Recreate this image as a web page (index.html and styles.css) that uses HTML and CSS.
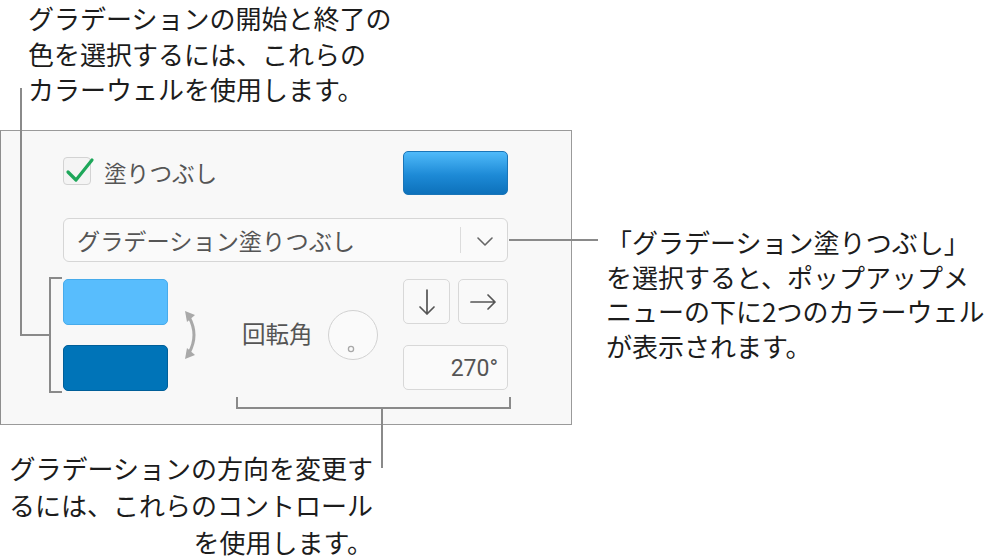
FILE: index.html
```html
<!DOCTYPE html>
<html lang="ja">
<head>
<meta charset="utf-8">
<title>グラデーション塗りつぶし</title>
<link rel="stylesheet" href="styles.css">
</head>
<body>
<div class="stage">
  <p class="note note-top">グラデーションの開始と終了の<br>色を選択するには、これらの<br>カラーウェルを使用します。</p>

  <section class="panel">
    <div class="fill-row">
      <label class="fill-toggle">
        <span class="checkbox">
          <svg class="check" width="28" height="28" viewBox="0 0 28 28"><path d="M5 15 L13 23 L29 3" /></svg>
        </span>
        <span class="fill-label">塗りつぶし</span>
      </label>
      <span class="well well-main"></span>
    </div>

    <div class="popup">
      <span class="popup-text">グラデーション塗りつぶし</span>
      <span class="popup-divider"></span>
      <svg class="chevron" width="16" height="9" viewBox="0 0 16 9"><path d="M1 1 L8 8 L15 1" /></svg>
    </div>

    <div class="gradient-row">
      <div class="wells">
        <span class="well well-start"></span>
        <span class="well well-end"></span>
      </div>
      <svg class="swap" width="20" height="50" viewBox="0 0 20 50">
        <path class="swap-arc" d="M7 7 Q17 25 7 43" />
        <polygon class="swap-head" points="3,1 13,5 5,12" />
        <polygon class="swap-head" points="3,49 13,45 5,38" />
      </svg>
      <span class="angle-label">回転角</span>
      <span class="dial">
        <svg width="50" height="50" viewBox="0 0 50 50"><circle cx="24" cy="39" r="2.6" /></svg>
      </span>
      <div class="direction">
        <div class="dir-buttons">
          <button class="dir-btn dir-down" type="button">
            <svg width="18" height="28" viewBox="0 0 18 28"><path d="M9 2 V26 M2 19 L9 26 L16 19" /></svg>
          </button>
          <button class="dir-btn dir-right" type="button">
            <svg width="28" height="18" viewBox="0 0 28 18"><path d="M2 9 H26 M19 2 L26 9 L19 16" /></svg>
          </button>
        </div>
        <div class="angle-field">270°</div>
      </div>
    </div>
  </section>

  <p class="note note-bottom">グラデーションの方向を変更す<br>るには、これらのコントロール<br>を使用します。</p>

  <p class="note note-right">「グラデーション塗りつぶし」<br>を選択すると、ポップアップメ<br>ニューの下に2つのカラーウェル<br>が表示されます。</p>

  <svg class="leaders" width="984" height="559" viewBox="0 0 984 559">
    <path d="M21 88 V335 H50" />
    <path d="M62 278 H50 V392 H62" />
    <path d="M509 240 H598" />
    <path d="M237 397 V408 H510 V397" />
    <path d="M382 408 V468" />
  </svg>
</div>
</body>
</html>
```

FILE: styles.css
```css
* {
  box-sizing: border-box;
}

html,
body {
  margin: 0;
  padding: 0;
  background: #ffffff;
}

body {
  font-family: "Noto Sans CJK JP", "Noto Sans", sans-serif;
}

.stage {
  position: relative;
  width: 984px;
  height: 559px;
  overflow: hidden;
  background: #ffffff;
}

/* callout text */
.note {
  margin: 0;
  font-size: 26px;
  line-height: 35.5px;
  color: #1c1c1c;
  white-space: nowrap;
}

.note-top {
  height: 130px;
  padding-left: 28px;
}

.note-bottom {
  width: 373px;
  margin-top: 24px;
  text-align: right;
  line-height: 37px;
}

.note-right {
  position: absolute;
  left: 606px;
  top: 225px;
  line-height: 34.5px;
}

/* leader lines drawn over the page */
.leaders {
  position: absolute;
  left: 0;
  top: 0;
  pointer-events: none;
}

.leaders path {
  fill: none;
  stroke: #8a8a8a;
  stroke-width: 2;
}

/* inspector panel */
.panel {
  width: 572px;
  height: 295px;
  padding: 20px 63px 0 62px;
  display: flex;
  flex-direction: column;
  background: #f8f8f8;
  border: 1px solid #9a9a9a;
  border-left-color: #8e8e8e;
  color: #555555;
}

.fill-row {
  display: flex;
  align-items: center;
  justify-content: space-between;
  height: 44px;
}

.fill-toggle {
  display: flex;
  align-items: center;
}

.checkbox {
  position: relative;
  width: 28px;
  height: 28px;
  margin-top: -4px;
  border: 1.5px solid #d3d3d3;
  border-radius: 4px;
  background: #f4f4f4;
}

.check {
  position: absolute;
  left: -1px;
  top: -1px;
  overflow: visible;
}

.check path {
  fill: none;
  stroke: #1ea75a;
  stroke-width: 3.2;
  stroke-linecap: round;
  stroke-linejoin: round;
}

.fill-label {
  margin-left: 13px;
  font-size: 22.6px;
  line-height: 30px;
}

.well {
  display: block;
  width: 105px;
  border-radius: 5px;
}

.well-main {
  height: 44px;
  background: linear-gradient(#4fbafa, #1d8ad6 55%, #0d71bb);
  border: 1px solid #1a75b8;
}

.popup {
  display: flex;
  align-items: center;
  height: 44px;
  margin-top: 23px;
  padding-left: 13px;
  border: 1px solid #d6d6d6;
  border-radius: 6px;
  background: #fafafa;
}

.popup-text {
  flex: 1;
  font-size: 23.2px;
  line-height: 30px;
}

.popup-divider {
  width: 1.5px;
  height: 26px;
  background: #dcdcdc;
}

.chevron {
  margin: 2px 14px 0 16px;
}

.chevron path {
  fill: none;
  stroke: #666666;
  stroke-width: 1.6;
  stroke-linecap: round;
  stroke-linejoin: round;
}

.gradient-row {
  display: flex;
  align-items: center;
  height: 112px;
  margin-top: 17px;
}

.wells {
  display: flex;
  flex-direction: column;
  gap: 20px;
}

.well-start {
  height: 46px;
  background: #58bdfd;
  border: 1px solid #47abeb;
}

.well-end {
  height: 46px;
  background: #0074b8;
  border: 1px solid #005f99;
}

.swap {
  margin-left: 14px;
}

.swap-arc {
  fill: none;
  stroke: #a9a9a9;
  stroke-width: 3;
}

.swap-head {
  fill: #a9a9a9;
}

.angle-label {
  margin-left: 40px;
  margin-top: -4px;
  font-size: 23.5px;
  line-height: 30px;
}

.dial {
  display: block;
  width: 50px;
  height: 50px;
  margin-left: 15px;
  border: 1.5px solid #d2d2d2;
  border-radius: 50%;
  background: #fafafa;
}

.dial svg {
  display: block;
  margin: -1.5px;
}

.dial circle {
  fill: none;
  stroke: #a8a8a8;
  stroke-width: 1.3;
}

.direction {
  display: flex;
  flex-direction: column;
  gap: 21px;
  width: 105px;
  margin-left: auto;
  align-self: flex-start;
}

.dir-buttons {
  display: flex;
  gap: 8px;
}

.dir-btn {
  display: flex;
  align-items: center;
  justify-content: center;
  height: 45px;
  padding: 0;
  border: 1px solid #d8d8d8;
  border-radius: 5px;
  background: #f9f9f9;
}

.dir-down {
  width: 47px;
}

.dir-right {
  width: 50px;
}

.dir-btn path {
  fill: none;
  stroke: #555555;
  stroke-width: 1.7;
  stroke-linecap: round;
  stroke-linejoin: round;
}

.angle-field {
  height: 45px;
  padding-right: 9px;
  border: 1px solid #d8d8d8;
  border-radius: 5px;
  background: #fafafa;
  font-family: Roboto, "Noto Sans", sans-serif;
  font-size: 23px;
  line-height: 45px;
  text-align: right;
  color: #555555;
}
```
